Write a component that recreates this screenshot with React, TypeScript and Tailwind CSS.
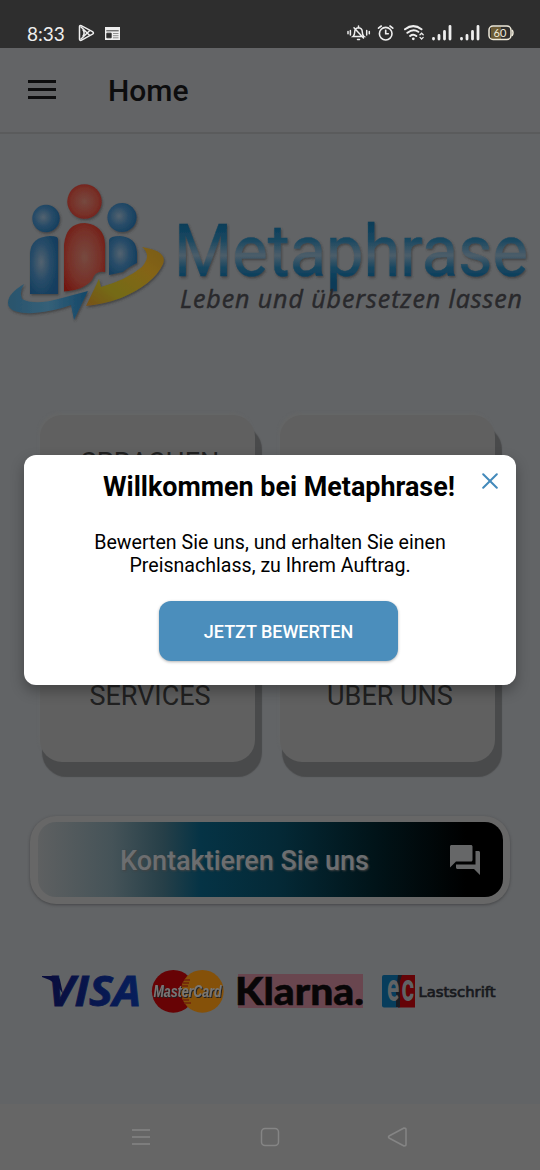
import type { ReactNode } from "react";
import { MdForum } from "react-icons/md";

function StatusBar() {
  return (
    <header className="flex h-12 shrink-0 items-center justify-between bg-[#2e2e2e] pt-[18px] pl-[27px] pr-[26px] text-[#eeeeee]">
      <div className="flex items-center">
        <span className="w-[51px] pt-px font-['Lato',sans-serif] text-[19px] leading-5">8:33</span>
        <svg className="h-[18px] w-[17px]" viewBox="0 0 17 18" fill="none" stroke="currentColor" strokeWidth="1.5" strokeLinejoin="round">
          <path d="M1.5 2.6Q1.6 1 3.2 1.7L14.5 7.7Q16.4 9 14.5 10.2L3.2 16.3Q1.5 16.8 1.5 15Z" />
          <path d="M2.5 2.5L11.8 11.5M2.5 15.5L11.8 6.5M4.8 5.5Q7.5 9 4.8 12.5" />
        </svg>
        <svg className="ml-[10px] h-[15px] w-[15px]" viewBox="0 0 15 15">
          <path d="M0 1h15v13H0z" fill="currentColor" />
          <path d="M1.3 4.8h12.4M1.8 7.2h4.4v4.6H1.8z" fill="#2e2e2e" stroke="#2e2e2e" strokeWidth=".9" />
          <path d="M8 7.5h5.5M8 9.7h5.5M8 11.8h5.5" stroke="#777" strokeWidth=".8" />
        </svg>
      </div>
      <div className="flex items-center">
        <svg className="h-[18px] w-[24px]" viewBox="0 0 24 18" fill="none" stroke="currentColor" strokeWidth="1.5" strokeLinecap="round">
          <path d="M6 12.5Q7.7 11.3 7.7 8Q7.7 4.3 11.5 3.8Q15.3 4.3 15.3 8Q15.3 11.3 17 12.5ZM11.5 2V3.5M10.5 15.4H12.5M7 3.8L16.5 14M3.4 6.4V11M1 7.5V9.8M19.7 6.4V11M22.3 7.5V9.8" />
        </svg>
        <svg className="ml-[6px] h-[18px] w-[18px]" viewBox="0 0 18 18" fill="none" stroke="currentColor" strokeWidth="1.6" strokeLinecap="round">
          <circle cx="8.7" cy="9.7" r="6.3" />
          <path d="M1.5 4.2L4.3 2M13 2L15.8 4.2M8.7 6.3V9.8H11.3" />
        </svg>
        <svg className="ml-[8px] h-[18px] w-[22px]" viewBox="0 0 22 18" fill="none" stroke="currentColor" strokeWidth="2" strokeLinecap="round">
          <path d="M2 5.3Q10.3 -1 18.5 5.3M4.4 8.8Q10.3 4.2 15.3 7.8M7.1 12Q10.3 9.5 13.3 12" />
          <circle cx="10.3" cy="14.8" r="1.4" fill="currentColor" stroke="none" />
          <path d="M17 10.8L18.6 9.2L20.2 10.8M17 13.4L18.6 15L20.2 13.4" strokeWidth="1.3" />
        </svg>
        <div className="-ml-px flex"><Signal /><Signal /></div>
        <svg className="ml-[8px] h-[16px] w-[26px]" viewBox="0 0 26 16">
          <path d="M3 2H13V14H3z" fill="#6b5a34" />
          <rect x="1" y="1" width="22" height="13.5" rx="4" fill="none" stroke="#eee9d9" strokeWidth="1.5" />
          <path d="M24 5Q26 7.5 24 11" fill="none" stroke="#eee9d9" strokeWidth="1.5" />
          <text x="12" y="11.7" textAnchor="middle" fill="#eee9d9" fontFamily="Lato, sans-serif" fontSize="11">60</text>
        </svg>
      </div>
    </header>
  );
}

function Signal() {
  return (
    <svg className="ml-[7px] h-[18px] w-[21px]" viewBox="0 0 21 18" stroke="currentColor" strokeWidth="2.8" strokeLinecap="round">
      <path d="M2.5 14.3V15M8 11.5V15M13.5 7.5V15M19 2.3V15" />
    </svg>
  );
}

function Logo() {
  return (
    <svg className="h-[150px] w-[540px] shrink-0 overflow-visible" viewBox="0 175 540 150">
      <defs>
        <radialGradient id="blue" cx=".4" cy=".45" r=".65">
          <stop offset="0" stopColor="#53626f" />
          <stop offset=".5" stopColor="#284c68" />
          <stop offset="1" stopColor="#123d5e" />
        </radialGradient>
        <radialGradient id="red" cx=".5" cy=".5" r=".65">
          <stop offset="0" stopColor="#76493f" />
          <stop offset=".6" stopColor="#773028" />
          <stop offset="1" stopColor="#71160e" />
        </radialGradient>
        <linearGradient id="yellow" x1="1" x2="0" y1="0" y2="1">
          <stop offset="0" stopColor="#795b15" />
          <stop offset=".3" stopColor="#846414" />
          <stop offset=".7" stopColor="#746b12" />
          <stop offset="1" stopColor="#77511b" />
        </linearGradient>
        <linearGradient id="sweep">
          <stop offset="0" stopColor="#28536c" />
          <stop offset=".5" stopColor="#356078" />
          <stop offset="1" stopColor="#144869" />
        </linearGradient>
        <linearGradient id="word" gradientUnits="userSpaceOnUse" x1="0" x2="0" y1="223" y2="282">
          <stop offset="0" stopColor="#0a3d58" />
          <stop offset=".27" stopColor="#174761" />
          <stop offset=".55" stopColor="#4c5d69" />
          <stop offset=".76" stopColor="#174761" />
          <stop offset="1" stopColor="#083b58" />
        </linearGradient>
        <filter id="shade" x="-10%" y="-20%" width="120%" height="150%">
          <feDropShadow dx="1" dy="1.5" stdDeviation=".8" floodColor="#333" floodOpacity=".65" />
        </filter>
      </defs>
      <g filter="url(#shade)">
        <circle cx="46" cy="218.5" r="13.7" fill="url(#blue)" />
        <circle cx="122" cy="217.5" r="14.6" fill="url(#blue)" />
        <circle cx="84.5" cy="201.5" r="17.2" fill="url(#red)" />
        <path d="M30 253Q31 237 50 236Q58 236 58 239V294H30Z" fill="url(#blue)" />
        <path d="M109 240Q110 236 120 236Q136 237 137 252V263Q127 268 123 272L109 275Z" fill="url(#blue)" />
        <path d="M64 245Q66 223 85 223Q104 225 105 244V272Q95 270 92 280Q84 290 64 291.5Z" fill="url(#red)" />
        <path d="M24 284Q4 296 9 307Q14 314 34 313Q55 311 71 305L74 320L88 291L62 298Q35 306 22 299Q19 292 24 284Z" fill="url(#sweep)" />
        <path d="M142 247Q168 251 163 264Q154 284 121 298Q105 304 86 306L99 279L101 287Q126 280 142 267Q152 255 142 247Z" fill="url(#yellow)" />
      </g>
      <text x="174" y="275.5" fill="url(#word)" stroke="url(#word)" strokeWidth=".5" filter="url(#shade)" fontFamily="Roboto, sans-serif" fontWeight="400" fontSize="72" textLength="354" lengthAdjust="spacingAndGlyphs">Metaphrase</text>
      <text x="180" y="307.5" fill="#29292c" stroke="#29292c" strokeWidth=".5" fontFamily="Open Sans, sans-serif" fontStyle="italic" fontWeight="500" fontSize="25" textLength="342" lengthAdjust="spacing">Leben und übersetzen lassen</text>
    </svg>
  );
}

function Card({ children }: { children?: ReactNode }) {
  return (
    <div className="h-[162px] w-[215px] rounded-[22px] bg-[#606060] text-center text-[27px] leading-8 text-[#212121] shadow-[-2px_-3px_3px_-1px_#656666,4.5px_12.5px_1px_2.5px_#494a4b]">
      <div className="flex h-full w-[220px] justify-center">{children}</div>
    </div>
  );
}

function Payments() {
  return (
    <svg className="h-[50px] w-[540px] shrink-0 overflow-visible" viewBox="0 967 540 50">
      <defs>
        <linearGradient id="visa"><stop stopColor="#090d3d" /><stop offset=".5" stopColor="#08174e" /><stop offset="1" stopColor="#071f5c" /></linearGradient>
        <filter id="cardShade" x="-5%" y="-10%" width="115%" height="130%"><feDropShadow dx="1" dy="1" stdDeviation=".3" floodColor="#222" /></filter>
      </defs>
      <path d="M42 976H54Q59 976 60 980L63 994Q56 981 42 977Z" fill="#090d3d" />
      <text x="48" y="1006" fill="url(#visa)" stroke="url(#visa)" strokeWidth=".8" fontFamily="Open Sans, sans-serif" fontWeight="700" fontStyle="italic" fontSize="42" textLength="93" lengthAdjust="spacingAndGlyphs">VISA</text>
      <circle cx="173.3" cy="991.3" r="21.4" fill="#670305" />
      <circle cx="202.3" cy="991.3" r="21.4" fill="#855109" />
      <path d="M184 980H190M183 983H189M182 986H188M182 997H188M183 1000H189M184 1003H191" stroke="#70220b" strokeWidth="1.5" />
      <text x="153.5" y="996.5" fill="#777" filter="url(#cardShade)" fontFamily="Liberation Sans, sans-serif" fontWeight="700" fontStyle="italic" fontSize="16" textLength="68" lengthAdjust="spacingAndGlyphs">MasterCard</text>
      <path d="M238 974H363V1008H238Z" fill="#69464f" />
      <text x="235" y="1004.5" fill="#080607" stroke="#080607" strokeWidth=".5" fontFamily="Lato, sans-serif" fontWeight="900" fontSize="37.5" textLength="129" lengthAdjust="spacingAndGlyphs">Klarna.</text>
      <rect x="382" y="975" width="19" height="32.5" rx="2" fill="#073d5c" />
      <path d="M398 975H415V1007.5H398Z" fill="#650307" />
      <path d="M398 975H402L400 981V1007H396V992Z" fill="#191c24" />
      <text transform="translate(387 1001) scale(.6 1)" fill="#606365" fontFamily="Roboto, sans-serif" fontWeight="700" fontSize="38">e</text>
      <text transform="translate(401.5 1001) scale(.64 1)" fill="#606365" fontFamily="Roboto, sans-serif" fontWeight="700" fontSize="38">c</text>
      <text x="418.5" y="997" fill="#17191d" stroke="#17191d" strokeWidth=".7" fontFamily="DejaVu Sans, sans-serif" fontSize="14.5" textLength="77" lengthAdjust="spacingAndGlyphs">Lastschrift</text>
    </svg>
  );
}

function ReviewDialog() {
  return (
    <div role="dialog" className="absolute top-[455px] left-6 h-[230px] w-[492px] rounded-[12px] bg-white text-center text-black shadow-[0_6px_14px_rgba(0,0,0,0.3)]">
      <h2 className="pt-4 pl-[18px] text-[26.9px] leading-8 font-bold">Willkommen bei Metaphrase!</h2>
      <svg aria-label="Schließen" className="absolute top-[17.5px] right-[18px] size-4" viewBox="0 0 16 16" stroke="#438abb" strokeWidth="2" strokeLinecap="round">
        <path d="M1.2 1.2L14.8 14.8M14.8 1.2L1.2 14.8" />
      </svg>
      <p className="mt-7 text-[19.6px] leading-[23px]">Bewerten Sie uns, und erhalten Sie einen<br />Preisnachlass, zu Ihrem Auftrag.</p>
      <button className="mt-6 ml-[17px] h-[60px] w-[239px] rounded-[12px] bg-[#4b8ebc] text-[18px] font-medium text-white shadow-[0_1px_3px_rgba(0,0,0,0.3)]">JETZT BEWERTEN</button>
    </div>
  );
}

export default function App() {
  return (
    <div className="relative flex h-[1170px] w-[540px] flex-col overflow-hidden bg-[#626466] font-['Roboto',sans-serif]">
      <StatusBar />
      <div className="flex h-[86px] shrink-0 items-center border-b-2 border-[#5a5b5c] bg-[#636466] pl-7 text-[#0d0d0e]">
        <svg className="h-5 w-7" viewBox="0 0 28 20" fill="currentColor"><path d="M0 0h28v3H0zM0 8h28v3H0zM0 16h28v3H0z" /></svg>
        <h1 className="ml-[52px] text-[30px] font-medium">Home</h1>
      </div>
      <main className="flex flex-1 flex-col items-center pt-[41px]">
        <Logo />
        <section className="mt-[90px] mr-[5px] grid grid-cols-2 gap-x-[25px] gap-y-[23px]">
          <Card><span className="pt-[32px]">SPRACHEN</span></Card>
          <Card />
          <Card><span className="pt-[80px]">SERVICES</span></Card>
          <Card><span className="pt-[80px]">ÜBER UNS</span></Card>
        </section>
        <button className="mt-[54px] h-[88px] w-[480px] rounded-[26px] bg-[#676767] pt-[6px] pr-[7px] pb-[7px] pl-2 shadow-[0_1px_3px_#444547]">
          <div className="flex h-[75px] items-center justify-between rounded-[18px] bg-[linear-gradient(90deg,#5e6061_0%,#455358_16%,#263f48_27%,#053345_35%,#042936_52%,#011419_72%,#000_92%)] pr-[20px] pl-[82px] text-[27px] font-medium text-[#6c6e70] [text-shadow:1px_1px_2px_#444]">
            <span className="pt-[3px]">Kontaktieren Sie uns</span>
            <MdForum className="size-9 text-[#666768]" />
          </div>
        </button>
        <div className="mt-[63px]"><Payments /></div>
      </main>
      <nav className="flex h-[66px] shrink-0 items-center bg-[#666666] pl-[132px] text-[#858585]">
        <svg className="h-5 w-[276px]" viewBox="0 0 276 20" fill="none" stroke="currentColor" strokeWidth="1.5" strokeLinejoin="round">
          <path d="M0 3H18M0 10H18M0 17H18" />
          <rect x="129.5" y="1.5" width="17" height="17" rx="3.5" />
          <path d="M257 9Q256 10 257 11L272 19Q274 19 274 17.5V2.5Q274 1 272 1Z" />
        </svg>
      </nav>
      <ReviewDialog />
    </div>
  );
}
